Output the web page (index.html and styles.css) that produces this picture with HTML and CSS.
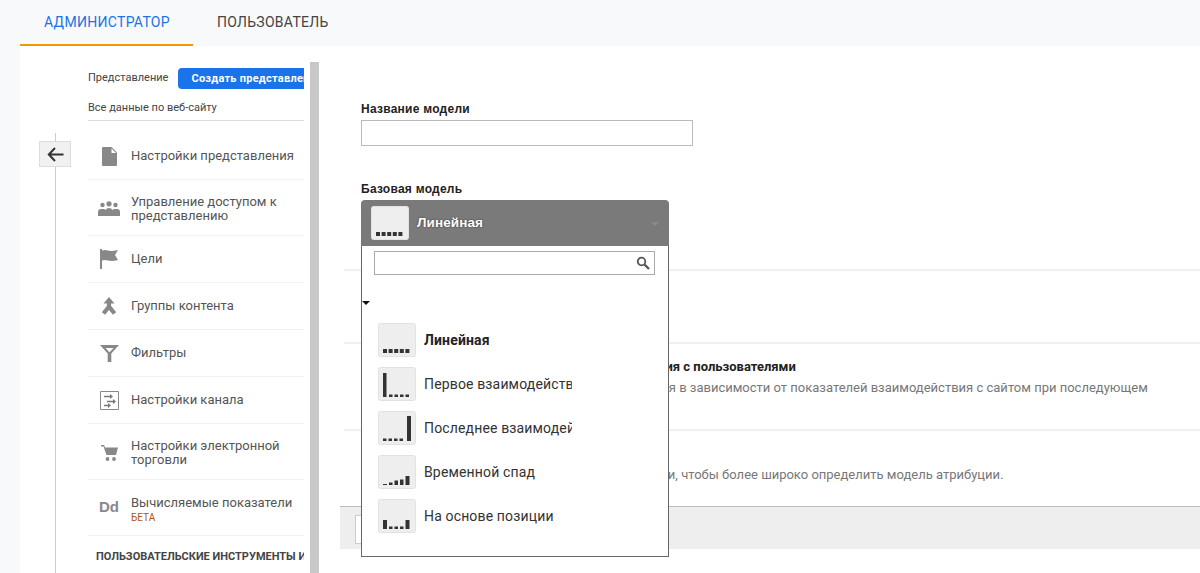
FILE: index.html
```html
<!DOCTYPE html>
<html lang="ru">

<head>
    <meta charset="UTF-8">
    <title>Администратор</title>
    <link rel="stylesheet" href="styles.css">
</head>

<body>
    <header class="tabs">
        <a class="tab active">АДМИНИСТРАТОР</a>
        <a class="tab">ПОЛЬЗОВАТЕЛЬ</a>
    </header>

    <div class="page">
        <div class="back-col">
            <button class="back">
                <svg width="17" height="15" viewBox="0 0 17 15"><path d="M16.500 7.500H2M8 1 1.800 7.500 8 14" fill="none" stroke="#333" stroke-width="2"/></svg>
            </button>
        </div>

        <aside class="side">
            <div class="side-head">
                <span>Представление</span>
                <span class="create">Создать представление</span>
            </div>
            <div class="side-sub">Все данные по веб-сайту</div>

            <ul class="nav">
                <li class="nav-row">
                    <span class="ico"><svg width="15" height="19" viewBox="0 0 15 19"><path d="M1 0h8.500L15 5.500V18a1 1 0 0 1-1 1H1a1 1 0 0 1-1-1V1a1 1 0 0 1 1-1z" fill="#888"/><path d="M9.500 1.500v4.500H14z" fill="#fff"/></svg></span>
                    <span>Настройки представления</span>
                </li>
                <li class="nav-row tall">
                    <span class="ico"><svg width="22" height="15" viewBox="0 0 22 15"><g fill="#888"><circle cx="4.500" cy="4" r="2.200"/><circle cx="11" cy="2.800" r="2.600"/><circle cx="17.500" cy="4" r="2.200"/><path d="M0 15v-4q0-3 3-3h2.500q1.500 0 2 1 1-2 3.500-2t3.500 2q.5-1 2-1H19q3 0 3 3v4z"/></g></svg></span>
                    <span>Управление доступом к<br>представлению</span>
                </li>
                <li class="nav-row">
                    <span class="ico"><svg width="18" height="20" viewBox="0 0 18 20"><path d="M0 0h2v20H0z" fill="#888"/><path d="M2 1.500q3-1 6 0t10-.5l-3 5 3 5q-6 1.500-10 .5t-6 0z" fill="#888"/></svg></span>
                    <span>Цели</span>
                </li>
                <li class="nav-row">
                    <span class="ico"><svg width="16" height="18" viewBox="0 0 16 18"><path d="M8 0l5.500 6.500H2.500z" fill="#888"/><path d="M8 5v4.500L2.500 16.500M8 9.500l5.500 7" fill="none" stroke="#888" stroke-width="4.200"/></svg></span>
                    <span>Группы контента</span>
                </li>
                <li class="nav-row">
                    <span class="ico"><svg width="19" height="17" viewBox="0 0 19 17"><path d="M0 0h19l-7.700 8.500V17H7.700V8.500z" fill="#888"/><path d="M5.500 3h8L9.500 7.200z" fill="#fff"/></svg></span>
                    <span>Фильтры</span>
                </li>
                <li class="nav-row">
                    <span class="ico"><svg width="19" height="19" viewBox="0 0 19 19"><path d="M.5.500h18v18H.5z" fill="#fff" stroke="#888"/><path d="M4 5.500h7M14 10.500H7M9 14.500H4" stroke="#777" stroke-width="1.500"/><path d="M10 3l3 2.500-3 2.500zM13 8l3 2.500-3 2.500zM8 12l3 2.500-3 2.500z" fill="#777"/></svg></span>
                    <span>Настройки канала</span>
                </li>
                <li class="nav-row tall">
                    <span class="ico"><svg width="17" height="16" viewBox="0 0 17 16"><path d="M0 0h3.200l.7 2.500H17L15 10H5.500L2.500 1.500H0z" fill="#888"/><circle cx="6.500" cy="14" r="1.900" fill="#888"/><circle cx="13" cy="14" r="1.900" fill="#888"/></svg></span>
                    <span>Настройки электронной<br>торговли</span>
                </li>
                <li class="nav-row tall beta-row">
                    <span class="ico dd">Dd</span>
                    <span>Вычисляемые показатели<em class="beta">БЕТА</em></span>
                </li>
            </ul>
            <div class="side-title">ПОЛЬЗОВАТЕЛЬСКИЕ ИНСТРУМЕНТЫ И АКТИВЫ</div>
        </aside>

        <div class="scrollbar"></div>

        <main class="main">
            <div class="form">
                <label class="field-label">Название модели</label>
                <input class="text-input" type="text">

                <div class="base">
                    <label class="field-label">Базовая модель</label>

                    <div class="dropdown">
                        <div class="dd-head">
                            <svg class="thumb" width="38" height="34" viewBox="0 0 38 34"><use href="#linear"/></svg>
                            <span class="dd-value">Линейная</span>
                            <span class="dd-arrow"></span>
                        </div>
                        <div class="dd-body">
                            <div class="search">
                                <svg width="14" height="14" viewBox="0 0 14 14"><circle cx="5.500" cy="5.500" r="3.800" fill="none" stroke="#555" stroke-width="1.800"/><path d="M8.500 8.500 13 13" stroke="#555" stroke-width="2.400"/></svg>
                            </div>
                            <span class="caret"></span>
                            <ul class="options">
                                <li class="option selected">
                                    <svg class="thumb" width="38" height="34" viewBox="0 0 38 34"><use href="#linear"/></svg>
                                    <span class="option-name">Линейная</span>
                                </li>
                                <li class="option">
                                    <svg class="thumb" width="38" height="34" viewBox="0 0 38 34"><use href="#first"/></svg>
                                    <span class="option-name">Первое взаимодействие</span>
                                </li>
                                <li class="option">
                                    <svg class="thumb" width="38" height="34" viewBox="0 0 38 34"><use href="#last"/></svg>
                                    <span class="option-name">Последнее взаимодействие</span>
                                </li>
                                <li class="option">
                                    <svg class="thumb" width="38" height="34" viewBox="0 0 38 34"><use href="#decay"/></svg>
                                    <span class="option-name">Временной спад</span>
                                </li>
                                <li class="option">
                                    <svg class="thumb" width="38" height="34" viewBox="0 0 38 34"><use href="#position"/></svg>
                                    <span class="option-name">На основе позиции</span>
                                </li>
                            </ul>
                        </div>
                    </div>
                </div>
            </div>

            <section class="block first"></section>
            <section class="block second">
                <h3 class="block-title">Применить модель с учетом взаимодействия с пользователями</h3>
                <p class="block-text">Изменять значимость точек взаимодействия в зависимости от показателей взаимодействия с сайтом при последующем</p>
            </section>
            <section class="block third">
                <p class="block-text">Добавьте собственные правила значимости, чтобы более широко определить модель атрибуции.</p>
            </section>
            <div class="actions">
                <button class="save"></button>
            </div>
        </main>
    </div>

    <!-- миниатюры моделей -->
    <svg class="defs" width="0" height="0">
        <symbol id="linear" viewBox="0 0 38 34">
            <rect x=".5" y=".5" width="37" height="33" rx="2" fill="#eee" stroke="#e2e2e2"/>
            <path d="M5 26h4v4H5zM10.600 26h4v4h-4zM16.200 26h4v4h-4zM21.800 26h4v4h-4zM27.400 26h4v4h-4z" fill="#333"/>
        </symbol>
        <symbol id="first" viewBox="0 0 38 34">
            <rect x=".5" y=".5" width="37" height="33" rx="2" fill="#eee" stroke="#e2e2e2"/>
            <path d="M5 6h3.500v24H5zM11 27.500h3.500V30H11zM16.500 27.500H20V30h-3.500zM22 27.500h3.500V30H22zM27.500 27.500H31V30h-3.500z" fill="#333"/>
        </symbol>
        <symbol id="last" viewBox="0 0 38 34">
            <rect x=".5" y=".5" width="37" height="33" rx="2" fill="#eee" stroke="#e2e2e2"/>
            <path d="M5 27.500h3.500V30H5zM10.500 27.500H14V30h-3.500zM16 27.500h3.500V30H16zM21.500 27.500H25V30h-3.500zM29 5h4v25h-4z" fill="#333"/>
        </symbol>
        <symbol id="decay" viewBox="0 0 38 34">
            <rect x=".5" y=".5" width="37" height="33" rx="2" fill="#eee" stroke="#e2e2e2"/>
            <path d="M5 29h4v1H5zM11 27.500h3.500V30H11zM16.500 25.500H20V30h-3.500zM22 24.500h3.500V30H22zM27.500 21h4v9h-4z" fill="#333"/>
        </symbol>
        <symbol id="position" viewBox="0 0 38 34">
            <rect x=".5" y=".5" width="37" height="33" rx="2" fill="#eee" stroke="#e2e2e2"/>
            <path d="M5 21h4v9H5zM11 27.500h3.500V30H11zM16.500 27.500H20V30h-3.500zM22 27.500h3.500V30H22zM27.500 21h4v9h-4z" fill="#333"/>
        </symbol>
    </svg>
</body>

</html>
```

FILE: styles.css
```css
* {
    box-sizing: border-box;
}
html,
body {
    height: 100%;
    margin: 0;
    padding: 0;
    overflow: hidden;
    background: #f8f9fa;
    font-family: Roboto, 'Liberation Sans', sans-serif;
    color: #444;
}
ul {
    list-style: none;
    margin: 0;
    padding: 0;
}

/* tabs */
.tabs {
    display: flex;
    height: 46px;
    padding-left: 20px;
}
.tab {
    height: 46px;
    padding: 14px 24px 0;
    font-size: 14px;
    line-height: 16px;
    letter-spacing: .3px;
    color: #444;
}
.tab.active {
    width: 173px;
    color: #1a73e8;
    border-bottom: 2px solid #f29900;
}

/* page */
.page {
    display: flex;
    height: 527px;
    margin-left: 20px;
    background: #fff;
}
.back-col {
    position: relative;
    width: 68px;
    padding: 95px 0 0 19px;
    flex: none;
}
.back-col::before {
    content: "";
    position: absolute;
    left: 35px;
    top: 87px;
    bottom: 0;
    width: 1px;
    background: #ccc;
}
.back {
    position: relative;
    display: flex;
    align-items: center;
    justify-content: center;
    width: 32px;
    height: 26px;
    padding: 0;
    background: #f1f1f1;
    border: 1px solid #ddd;
}

/* sidebar */
.side {
    width: 216px;
    flex: none;
    padding-top: 22px;
    overflow: hidden;
    font-size: 13px;
}
.side-head {
    display: flex;
    align-items: center;
    height: 21px;
    font-size: 11px;
    color: #444;
    white-space: nowrap;
}
.side-head > span:first-child {
    margin-top: -2px;
}
.create {
    height: 21px;
    margin-left: 10px;
    padding: 0 0 0 13px;
    font-weight: 700;
    line-height: 21px;
    letter-spacing: .25px;
    color: #fff;
    background: #1a73e8;
    border-radius: 4px 0 0 4px;
}
.side-sub {
    height: 32px;
    padding-top: 12px;
    font-size: 11px;
    line-height: 13px;
    border-bottom: 1px solid #ddd;
}
.nav {
    margin-top: 12px;
}
.nav-row {
    display: flex;
    align-items: center;
    height: 47px;
    line-height: 14px;
    color: #555;
    border-bottom: 1px solid #f2f2f2;
}
.nav-row.tall {
    height: 56px;
    padding-top: 2px;
}
.nav-row.beta-row {
    padding-top: 5px;
}
.ico {
    display: flex;
    align-items: center;
    justify-content: center;
    width: 34px;
    margin: 0 5px 0 4px;
    flex: none;
}
.dd {
    margin-top: -6px;
    font-family: 'Liberation Sans', sans-serif;
    font-size: 15px;
    font-weight: 700;
    color: #888;
}
.beta {
    display: block;
    margin-top: 1px;
    font-size: 10px;
    font-style: normal;
    color: #a8581f;
}
.side-title {
    margin: 14px 0 0 8px;
    font-size: 11px;
    font-weight: 700;
    line-height: 13px;
    color: #444;
    white-space: nowrap;
}
.scrollbar {
    width: 9px;
    margin: 16px 0 0 6px;
    background: #c8c8c8;
    flex: none;
}

/* main */
.main {
    flex: 1;
    min-width: 0;
}
.form {
    height: 223px;
    padding: 56px 0 0 42px;
}
.field-label {
    display: block;
    font-family: 'Liberation Sans', sans-serif;
    font-size: 12px;
    font-weight: 700;
    line-height: 14px;
    letter-spacing: .25px;
    color: #222;
}
.text-input {
    display: block;
    width: 332px;
    height: 26px;
    margin-top: 4px;
    background: #fff;
    border: 1px solid #bbb;
}
.base {
    position: relative;
    margin-top: 36px;
}
.block {
    margin-left: 25px;
    border-top: 2px solid #f0f0f0;
}
.first {
    height: 73px;
}
.second {
    height: 87px;
    padding: 16px 0 0 17px;
}
.third {
    height: 77px;
    padding: 37px 0 0 58px;
}
.block-title {
    margin: 0 0 7px 36px;
    font-size: 13px;
    font-weight: 700;
    line-height: 14px;
    color: #222;
    white-space: nowrap;
}
.block-text {
    margin: 0;
    font-size: 13px;
    line-height: 14px;
    color: #777;
    white-space: nowrap;
}
.second .block-text {
    margin-left: 35px;
}
.actions {
    height: 43px;
    margin-left: 21px;
    padding: 8px 0 0 15px;
    background: #eee;
    border-top: 1px solid #bbb;
}
.save {
    display: block;
    width: 60px;
    height: 29px;
    background: #fff;
    border: 1px solid #ccc;
}

/* dropdown */
.dropdown {
    position: absolute;
    left: 0;
    top: 18px;
    width: 308px;
    z-index: 2;
}
.dd-head {
    position: relative;
    display: flex;
    align-items: center;
    height: 46px;
    padding-left: 10px;
    background: #7a7a7a;
    border-radius: 4px 4px 0 0;
}
.dd-value {
    margin: -2px 0 0 8px;
    font-family: 'Liberation Sans', sans-serif;
    font-size: 13.500px;
    font-weight: 700;
    letter-spacing: .1px;
    color: #fff;
    text-shadow: 0 0 2px #333;
}
.dd-arrow {
    position: absolute;
    right: 10px;
    top: 22px;
    border: 4px solid transparent;
    border-top-color: #8a8a8a;
    border-bottom: 0;
}
.dd-body {
    position: relative;
    height: 311px;
    padding: 5px 13px 0 12px;
    background: #fff;
    border: 1px solid #666;
    border-top: 0;
}
.search {
    display: flex;
    align-items: center;
    justify-content: flex-end;
    height: 24px;
    padding-right: 4px;
    border: 1px solid #aaa;
}
.caret {
    position: absolute;
    left: 0;
    top: 55px;
    border: 4px solid transparent;
    border-top-color: #111;
    border-bottom: 0;
}
.options {
    margin: 48px 0 0 4px;
}
.option {
    display: flex;
    align-items: center;
    height: 34px;
    margin-bottom: 10px;
}
.option-name {
    width: 148px;
    margin-left: 8px;
    overflow: hidden;
    font-size: 14px;
    letter-spacing: .15px;
    color: #333;
    white-space: nowrap;
}
.option.selected .option-name {
    font-weight: 700;
    color: #222;
}
.defs {
    position: absolute;
}
```
